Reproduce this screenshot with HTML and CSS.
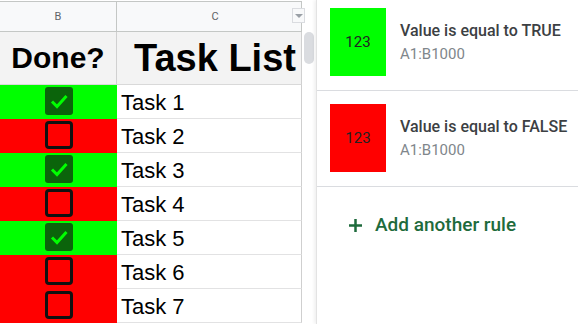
FILE: index.html
```html
<!DOCTYPE html>
<html lang="en">
<head>
  <meta charset="UTF-8">
  <meta name="viewport" content="width=device-width, initial-scale=1.0">
  <title>Task List - Conditional formatting</title>
  <link rel="stylesheet" href="styles.css">
</head>
<body>
  <div class="app">
    <div class="sheet">
      <div class="grid">
        <div class="col-head">B</div>
        <div class="col-head col-c">C<span class="filter"></span></div>
        <div class="title-cell">Done?</div>
        <div class="title-cell big">Task List</div>

        <div class="done yes"><span class="box checked"><svg viewBox="0 0 28 28"><path d="M7 14.5 L12 19.5 L21.5 9"/></svg></span></div>
        <div class="task">Task 1</div>
        <div class="done no"><span class="box"></span></div>
        <div class="task">Task 2</div>
        <div class="done yes"><span class="box checked"><svg viewBox="0 0 28 28"><path d="M7 14.5 L12 19.5 L21.5 9"/></svg></span></div>
        <div class="task">Task 3</div>
        <div class="done no"><span class="box"></span></div>
        <div class="task">Task 4</div>
        <div class="done yes"><span class="box checked"><svg viewBox="0 0 28 28"><path d="M7 14.5 L12 19.5 L21.5 9"/></svg></span></div>
        <div class="task">Task 5</div>
        <div class="done no"><span class="box"></span></div>
        <div class="task">Task 6</div>
        <div class="done no"><span class="box"></span></div>
        <div class="task">Task 7</div>
      </div>
      <div class="scroll"><div class="thumb"></div></div>
    </div>

    <div class="panel">
      <div class="rule first">
        <div class="swatch green">123</div>
        <div class="rule-text">
          <div class="rule-title">Value is equal to TRUE</div>
          <div class="rule-range">A1:B1000</div>
        </div>
      </div>
      <div class="rule">
        <div class="swatch red">123</div>
        <div class="rule-text">
          <div class="rule-title">Value is equal to FALSE</div>
          <div class="rule-range">A1:B1000</div>
        </div>
      </div>
      <div class="add-rule">
        <svg class="plus" viewBox="0 0 13 13"><path d="M6.5 0 V13 M0 6.5 H13"/></svg>
        <span>Add another rule</span>
      </div>
    </div>
  </div>
</body>
</html>
```

FILE: styles.css
```css
body {
  margin: 0;
  background: #ffffff;
  font-family: "Liberation Sans", Arial, sans-serif;
}
.app {
  display: flex;
  width: 578px;
  height: 324px;
  overflow: hidden;
}
.sheet {
  display: flex;
  width: 316px;
  flex: none;
}
.grid {
  width: 302px;
  margin-top: 1px;
  display: grid;
  grid-template-columns: 117px 185px;
  grid-template-rows: 31px 53px repeat(7, 34px);
}
.col-head {
  box-sizing: border-box;
  position: relative;
  display: flex;
  align-items: center;
  justify-content: center;
  background: #f8f9fa;
  border-top: 1px solid #c4c7c5;
  border-bottom: 1px solid #c4c7c5;
  border-right: 1px solid #c4c7c5;
  color: #5f6368;
  font-family: Roboto, "Liberation Sans", sans-serif;
  font-size: 11px;
}
.col-c {
  padding-left: 12px;
}
.filter {
  position: absolute;
  right: -4px;
  top: 6px;
  width: 13px;
  height: 15px;
  box-sizing: border-box;
  border: 1px solid #dadce0;
  background: #f8f9fa;
}
.filter::after {
  content: "";
  position: absolute;
  left: 2px;
  top: 5px;
  border-left: 4px solid transparent;
  border-right: 4px solid transparent;
  border-top: 4px solid #9aa0a6;
}
.title-cell {
  box-sizing: border-box;
  display: flex;
  align-items: center;
  justify-content: center;
  background: #f3f3f3;
  border-bottom: 1px solid #d9d9d9;
  border-right: 1px solid #d0d0d0;
  font-size: 30px;
  font-weight: bold;
  color: #000;
}
.title-cell.big {
  font-size: 38px;
  padding-left: 12px;
  white-space: nowrap;
}
.done {
  display: flex;
  align-items: center;
  justify-content: center;
  padding-bottom: 2px;
  box-sizing: border-box;
}
.done.yes {
  background: #00ff00;
}
.done.no {
  background: #ff0000;
}
.box {
  box-sizing: border-box;
  width: 28px;
  height: 28px;
  border: 3px solid #111;
  border-radius: 4px;
}
.box.checked {
  border: none;
  border-radius: 3px;
  background: #0b640b;
}
.box svg {
  display: block;
  width: 28px;
  height: 28px;
}
.box svg path {
  fill: none;
  stroke: #00ff00;
  stroke-width: 3;
}
.task {
  box-sizing: border-box;
  padding: 3px 0 0 4px;
  line-height: 30px;
  font-size: 22px;
  color: #000;
  border-bottom: 1px solid #e2e2e3;
  border-right: 1px solid #cfcfcf;
}
.scroll {
  width: 14px;
  padding: 32px 1px 0 2px;
  box-sizing: border-box;
}
.thumb {
  width: 10px;
  height: 32px;
  border-radius: 5px;
  background: #dadce0;
}
.panel {
  flex: 1;
  border-left: 1px solid #e3e3e3;
  box-shadow: -2px 0 3px rgba(0, 0, 0, 0.06);
  font-family: Roboto, "Liberation Sans", sans-serif;
}
.rule {
  display: flex;
  align-items: center;
  gap: 14px;
  padding: 13px 0 14px 13px;
  border-bottom: 1px solid #dadce0;
}
.rule.first {
  padding-top: 8px;
}
.swatch {
  width: 56px;
  height: 68px;
  display: flex;
  align-items: center;
  justify-content: center;
  font-size: 15px;
  color: #222;
}
.swatch.green {
  background: #00ff00;
}
.swatch.red {
  background: #ff0000;
}
.rule-title {
  font-size: 16px;
  line-height: 20px;
  font-weight: 500;
  color: #3c4043;
}
.rule-range {
  margin-top: 3px;
  font-size: 15px;
  line-height: 20px;
  color: #80868b;
}
.add-rule {
  display: flex;
  align-items: center;
  gap: 13px;
  margin: 26px 0 0 32px;
  color: #1e6b3c;
  font-size: 19px;
  font-weight: 500;
  line-height: 24px;
}
.plus {
  width: 13px;
  height: 13px;
}
.plus path {
  stroke: #1e6b3c;
  stroke-width: 2.5;
}
```
